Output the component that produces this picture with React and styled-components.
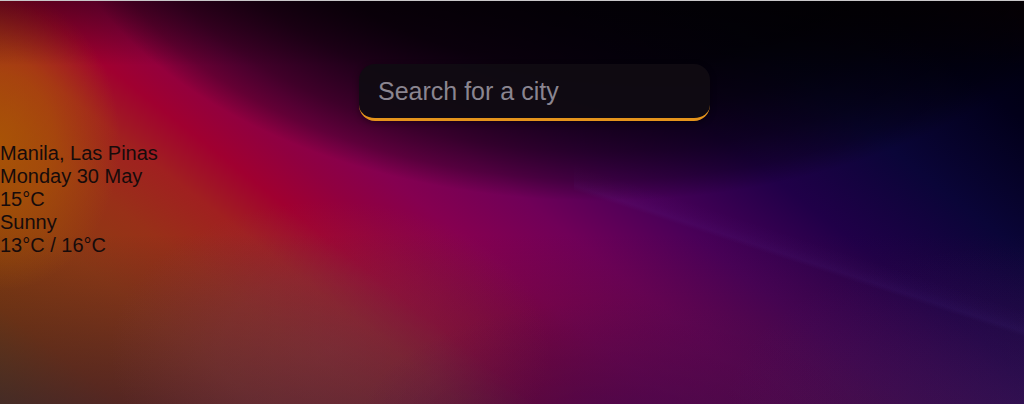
import React from "react"
import styled, { createGlobalStyle } from "styled-components"

const GlobalStyle = createGlobalStyle`
  html, body {
    margin: 0;
    padding: 0;
    background: #000;
  }
  * {
    box-sizing: border-box;
  }
`

// wallpaper: layered gradients, top one first
const Page = styled.div`
  width: 100%;
  height: 404px;
  overflow: hidden;
  border-top: 1px solid #c9c7c9;
  display: flex;
  flex-direction: column;
  font-family: "Liberation Sans", Arial, sans-serif;
  background-repeat: no-repeat;
  background-image:
    radial-gradient(ellipse 560px 350px at 600px -150px, rgba(0, 0, 0, 0.92) 0%, rgba(0, 0, 0, 0.85) 62%, rgba(0, 0, 0, 0.72) 74%, rgba(0, 0, 0, 0.5) 86%, rgba(0, 0, 0, 0.28) 94%, rgba(0, 0, 0, 0) 100%),
    linear-gradient(180deg, rgba(20, 0, 5, 0.45) 0%, rgba(20, 0, 5, 0) 16%),
    radial-gradient(ellipse 120px 150px at 0px 140px, rgba(176, 96, 0, 0.7) 0%, rgba(176, 96, 0, 0.5) 45%, rgba(176, 96, 0, 0) 100%),
    linear-gradient(18deg, rgba(120, 100, 240, 0) 52.5%, rgba(120, 100, 240, 0.05) 53.8%, rgba(120, 100, 240, 0.02) 56%, rgba(120, 100, 240, 0) 59%),
    radial-gradient(ellipse 300px 160px at 1024px 404px, rgba(60, 40, 160, 0.16), rgba(60, 40, 160, 0) 100%),
    radial-gradient(ellipse 260px 120px at 620px 420px, rgba(70, 0, 90, 0.5), rgba(70, 0, 90, 0) 100%),
    radial-gradient(ellipse 220px 150px at 330px 350px, rgba(130, 62, 82, 0.35) 0%, rgba(130, 62, 82, 0.25) 50%, rgba(130, 62, 82, 0) 100%),
    linear-gradient(0deg, rgba(50, 20, 55, 0.55) 0%, rgba(50, 20, 55, 0) 42%),
    linear-gradient(
      38deg,
      #5c4810 0%,
      #7e3c0a 8%,
      #8e3a12 17%,
      #983018 24%,
      #a02020 30%,
      #a00030 35%,
      #900040 39.5%,
      #850050 44%,
      #700058 51%,
      #4a0058 59%,
      #200048 69%,
      #0a0538 79%,
      #02001a 90%,
      #000008 100%
    );
  background-size:
    100% 100%,
    100% 100%,
    100% 100%,
    450px 260px,
    100% 100%,
    100% 100%,
    100% 100%,
    100% 100%,
    100% 100%;
  background-position:
    0 0,
    0 0,
    0 0,
    right bottom,
    0 0,
    0 0,
    0 0,
    0 0,
    0 0;
`

const SearchRow = styled.div`
  display: flex;
  padding: 63px 0 0 359px;
`

const SearchInput = styled.input`
  width: 351px;
  height: 57px;
  padding: 0 19px;
  border: none;
  border-bottom: 3px solid #e5941c;
  border-radius: 16px;
  background: rgba(16, 11, 18, 0.94);
  box-shadow: 0 2px 6px rgba(0, 0, 0, 0.35);
  color: #ddd;
  font-family: "Liberation Sans", Arial, sans-serif;
  font-size: 25px;
  outline: none;

  &::placeholder {
    color: #8a8590;
  }
`

const Info = styled.div`
  margin-top: 21px;
  display: flex;
  flex-direction: column;
  color: #160b0b;
  font-size: 20px;
  line-height: 23px;
`

const InfoLine = styled.div`
  white-space: nowrap;
`

const weather = {
  city: "Manila, Las Pinas",
  date: "Monday 30 May",
  temp: "15°C",
  description: "Sunny",
  range: "13°C / 16°C",
}

export default function App() {
  return (
    <>
      <GlobalStyle />
      <Page>
        <SearchRow>
          <SearchInput type="text" placeholder="Search for a city" />
        </SearchRow>
        <Info>
          <InfoLine>{weather.city}</InfoLine>
          <InfoLine>{weather.date}</InfoLine>
          <InfoLine>{weather.temp}</InfoLine>
          <InfoLine>{weather.description}</InfoLine>
          <InfoLine>{weather.range}</InfoLine>
        </Info>
      </Page>
    </>
  )
}
